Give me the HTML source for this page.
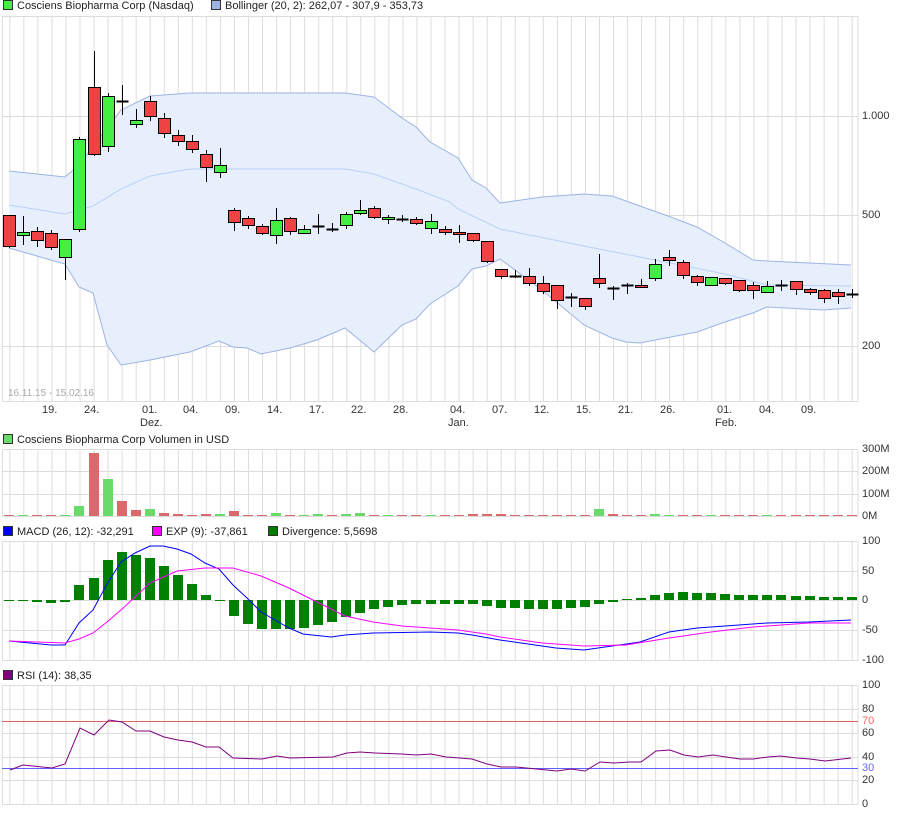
<!DOCTYPE html>
<html><head><meta charset="utf-8"><style>
html,body{margin:0;padding:0;background:#fff;width:900px;height:814px;overflow:hidden}
body{position:relative;font-family:"Liberation Sans",sans-serif;color:#222}
.lg{position:absolute;font-size:11px;line-height:13px;white-space:nowrap}
.sq{display:inline-block;width:8px;height:8px;border:1px solid #333;vertical-align:-1px;margin-right:4px}
.ax{position:absolute;font-size:11px;color:#333;line-height:12px}
svg{position:absolute;left:0;top:0}
</style></head><body>
<svg id="s" width="900" height="814" xmlns="http://www.w3.org/2000/svg"></svg>
<div class="lg" style="left:3px;top:0px"><span class="sq" style="background:#44ee44"></span>Cosciens Biopharma Corp (Nasdaq)</div>
<div class="lg" style="left:211px;top:0px"><span class="sq" style="background:#9db3e3"></span>Bollinger (20, 2): 262,07 - 307,9 - 353,73</div>
<div class="lg" style="left:3px;top:434px"><span class="sq" style="background:#6ada6a"></span>Cosciens Biopharma Corp Volumen in USD</div>
<div class="lg" style="left:3px;top:526px"><span class="sq" style="background:#0000ff"></span>MACD (26, 12): -32,291</div>
<div class="lg" style="left:152px;top:526px"><span class="sq" style="background:#ff00ff"></span>EXP (9): -37,861</div>
<div class="lg" style="left:268px;top:526px"><span class="sq" style="background:#007a00"></span>Divergence: 5,5698</div>
<div class="lg" style="left:3px;top:670px"><span class="sq" style="background:#800080"></span>RSI (14): 38,35</div>
<div class="ax" style="left:8px;top:388px;color:#aaa;font-size:10px">16.11.15 - 15.02.16</div>
<div class="ax" style="left:862px;top:110px">1.000</div>
<div class="ax" style="left:862px;top:209px">500</div>
<div class="ax" style="left:862px;top:340px">200</div>
<div class="ax" style="left:862px;top:443px">300M</div>
<div class="ax" style="left:862px;top:465px">200M</div>
<div class="ax" style="left:862px;top:488px">100M</div>
<div class="ax" style="left:862px;top:510px">0M</div>
<div class="ax" style="left:862px;top:535px">100</div>
<div class="ax" style="left:862px;top:565px">50</div>
<div class="ax" style="left:862px;top:594px">0</div>
<div class="ax" style="left:862px;top:624px">-50</div>
<div class="ax" style="left:862px;top:654px">-100</div>
<div class="ax" style="left:862px;top:679px">100</div>
<div class="ax" style="left:862px;top:703px">80</div>
<div class="ax" style="left:862px;top:715px;color:#f66">70</div>
<div class="ax" style="left:862px;top:727px">60</div>
<div class="ax" style="left:862px;top:751px">40</div>
<div class="ax" style="left:862px;top:762px;color:#66f">30</div>
<div class="ax" style="left:862px;top:774px">20</div>
<div class="ax" style="left:862px;top:798px">0</div>
<div id="dl"></div>
<script>
var S=document.getElementById('s'),h='';
function X(i){return 9.3+14.04*i}
function L(x1,y1,x2,y2,c,w){h+='<line x1="'+x1+'" y1="'+y1+'" x2="'+x2+'" y2="'+y2+'" stroke="'+c+'" stroke-width="'+(w||1)+'"/>'}
function R(x,y,w,hh,f,st){h+='<rect x="'+x+'" y="'+y+'" width="'+w+'" height="'+hh+'" fill="'+f+'"'+(st?' stroke="'+st+'"':'')+'/>'}
function P(pts,c,w,fill){h+='<polyline points="'+pts.map(function(p){return p.join(',')}).join(' ')+'" fill="'+(fill||'none')+'" stroke="'+c+'" stroke-width="'+(w||1)+'"/>'}
var panels=[[16,401,[116,215,346]],[449,516,[449,471,494,516]],[541,660,[541,571,600,630,660]],[685,804,[685,709,733,757,780,804]]];
panels.forEach(function(p){
 for(var i=0;i<61;i++)L(X(i)+.5,p[0],X(i)+.5,p[1],'#ddd');
 p[2].forEach(function(y){L(2,y+.5,858,y+.5,'#ddd')});
 h+='<rect x="2.5" y="'+(p[0]+.5)+'" width="855.5" height="'+(p[1]-p[0])+'" fill="none" stroke="#ddd"/>';
});
// bollinger
var up=[[9,171],[65,177],[79,165],[121,110],[150,96],[190,93],[345,93],[374,97],[402,118],[416,127],[430,142],[458,158],[472,180],[486,188],[500,203],[542,197],[584,194],[612,196],[626,201],[668,216],[697,227],[725,243],[753,260],[767,261],[851,265]];
var lo=[[9,248],[65,264],[79,287],[93,293],[107,345],[121,365],[150,360],[190,352],[219,341],[233,347],[247,348],[261,354],[290,348],[317,340],[345,328],[374,352],[402,325],[416,319],[430,304],[458,286],[472,269],[486,266],[500,259],[542,290],[584,325],[612,338],[626,342],[640,343],[697,332],[725,322],[753,313],[767,307],[823,310],[851,308]];
var mid=[[9,205],[65,214],[93,206],[121,189],[150,176],[190,169],[345,169],[374,174],[416,189],[450,202],[458,209],[500,229],[584,246],[655,260],[725,274],[767,285],[851,286]];
h+='<polygon points="'+up.concat(lo.slice().reverse()).map(function(p){return p.join(',')}).join(' ')+'" fill="#e8effc"/>';
P(up,'#9db3e3');P(lo,'#9db3e3');P(mid,'#b9cff5');
// candles: [c, top, bottom, hi, lo]
var C=[['r',215,246,215,248],['g',232,235,216,245],['r',231,240,227,247],['r',233,247,230,250],['g',239,257,239,280],['g',139,229,137,232],['r',87,154,51,156],['g',96,146,93,152],['x',101,101,85,115],['g',120,124,109,128],['r',101,116,96,121],['r',118,133,113,138],['r',135,141,130,146],['r',141,149,135,153],['r',154,167,150,182],['g',165,172,148,178],['r',210,222,208,231],['r',218,225,216,229],['r',226,233,224,235],['g',220,235,208,244],['r',218,231,217,235],['g',229,233,225,233],['x',226,226,214,234],['x',229,229,223,232],['g',214,225,212,229],['g',210,213,200,215],['r',208,217,206,219],['g',217,219,215,224],['x',219,219,215,222],['r',219,223,217,225],['g',221,228,214,234],['r',229,232,226,235],
['r',232,234,225,243],['r',233,240,233,242],['r',241,261,241,263],['r',269,276,269,279],['x',276,276,270,278],['r',276,283,268,286],['r',283,291,276,294],['r',285,300,285,309],['x',297,297,293,307],['r',298,306,298,310],['r',278,283,254,288],['x',288,288,286,300],['x',285,285,283,294],['r',285,286,279,288],['g',264,278,259,281],['r',257,260,250,266],['r',262,275,260,279],['r',276,282,275,286],['g',277,285,277,285],['r',278,283,278,285],['r',280,290,280,292],['r',285,290,282,299],['g',286,292,281,292],['x',285,285,280,291],['r',281,289,281,295],['r',289,292,288,295],['r',290,298,289,303],['r',292,296,289,304],['x',294,294,289,298]];
C.forEach(function(c,i){var x=Math.round(X(i))+.5;L(x,c[3],x,c[4],'#000');
 if(c[0]=='x'){L(x-6,c[1]+.5,x+6,c[1]+.5,'#000',2);}
 else R(x-6,c[1]+.5,12,Math.max(c[2]-c[1],2),c[0]=='r'?'#ef4343':'#43ef43','#000');});
// volume
var V={5:[506,'g'],6:[453,'r'],7:[479,'g'],8:[501,'r'],9:[510,'r'],10:[509,'g'],11:[513,'r'],12:[514,'r'],13:[515,'r'],14:[514,'r'],15:[514,'g'],16:[511,'r'],19:[513,'g'],22:[514,'g'],24:[514,'g'],25:[513,'g'],33:[514,'r'],34:[514,'r'],35:[514,'r'],42:[509,'g'],43:[514,'r'],46:[514,'g'],47:[515,'g']};
C.forEach(function(c,i){var v=V[i]||[515,c[0]=='g'?'g':'r'];R(Math.round(X(i))-5,v[0],10,516-v[0],v[1]=='g'?'#6ada6a':'#d9696b');});
// divergence
var D=[601,601,602,603,602,585,578,560,552,555,558,566,575,584,595,601,616,624,629,629,629,628,625,622,617,613,609,607,605,604,604,604,604,604,606,608,608,609,609,609,608,607,604,602,599,598,595,593,592,593,593,594,595,595,595,595,596,596,597,597,597];
D.forEach(function(d,i){var x=Math.round(X(i))-5;if(d<600)R(x,d,10,600-d,'#008000');else R(x,600,10,Math.max(d-600,1),'#008000');});
P([[9,641],[51,645],[65,645],[79,623],[93,610],[107,584],[121,562],[135,553],[150,546],[163,546],[177,549],[191,554],[205,563],[219,569],[233,585],[247,598],[261,612],[275,620],[289,628],[303,634],[331,637],[345,635],[359,634],[373,633],[430,632],[458,633],[472,635],[500,640],[528,644],[556,648],[584,650],[612,646],[640,642],[669,632],[697,628],[725,626],[767,623],[809,622],[851,620]],'#0000ff');
P([[9,641],[65,643],[79,639],[93,633],[107,622],[121,610],[135,597],[150,583],[177,571],[205,568],[233,568],[261,576],[289,588],[317,602],[345,616],[373,622],[402,626],[430,628],[458,630],[486,634],[500,637],[542,643],[584,646],[626,645],[669,638],[711,632],[753,627],[809,623],[851,623]],'#ff00ff');
// rsi
L(2,721.5,858,721.5,'#e06060');L(2,768.5,858,768.5,'#6060ff');
P([[10,770],[23,765],[52,768],[65,764],[80,728],[94,735],[109,720],[122,722],[136,731],[150,731],[164,737],[178,740],[192,742],[206,747],[219,747],[233,758],[262,759],[277,756],[290,758],[333,757],[347,753],[360,752],[375,753],[402,754],[416,755],[431,754],[446,757],[460,758],[472,759],[487,764],[501,767],[516,767],[557,771],[571,769],[585,771],[600,762],[614,763],[629,762],[641,762],[656,751],[670,750],[684,755],[698,757],[713,755],[726,757],[740,759],[753,759],[768,757],[780,756],[797,758],[810,759],[825,761],[851,758]],'#800080');
S.innerHTML=h;
// date labels
var dl=[['19.',50],['24.',92],['01.',150,'Dez.'],['04.',191],['09.',233],['14.',275],['17.',317],['22.',359],['28.',401],['04.',458,'Jan.'],['07.',500],['12.',542],['15.',584],['21.',626],['26.',668],['01.',725,'Feb.'],['04.',767],['09.',809]],t='';
dl.forEach(function(d){t+='<div class="ax" style="left:'+(d[1]-8)+'px;top:404px">'+d[0]+'</div>';if(d[2])t+='<div class="ax" style="left:'+(d[1]-10)+'px;top:417px">'+d[2]+'</div>';});
document.getElementById('dl').innerHTML=t;
</script>
</body></html>
